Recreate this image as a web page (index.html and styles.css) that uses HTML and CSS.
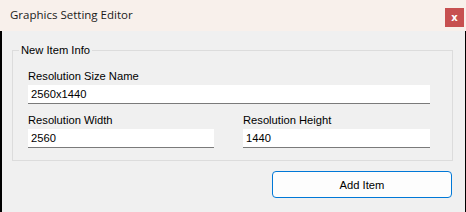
FILE: index.html
```html
<!DOCTYPE html>
<html lang="en">
<head>
    <meta charset="UTF-8">
    <meta name="viewport" content="width=device-width, initial-scale=1.0">
    <title>Graphics Setting Editor</title>
    <link rel="stylesheet" href="styles.css">
</head>
<body>
    <div class="window">
        <!-- Title bar -->
        <div class="titlebar">
            <span class="title">Graphics Setting Editor</span>
            <button class="close-btn">x</button>
        </div>

        <!-- Form -->
        <div class="content">
            <fieldset class="group">
                <legend>New Item Info</legend>
                <label class="field-label" for="name">Resolution Size Name</label>
                <input class="field" type="text" id="name" value="2560x1440">
                <div class="row">
                    <div class="col">
                        <label class="field-label" for="width">Resolution Width</label>
                        <input class="field" type="text" id="width" value="2560">
                    </div>
                    <div class="col">
                        <label class="field-label" for="height">Resolution Height</label>
                        <input class="field" type="text" id="height" value="1440">
                    </div>
                </div>
            </fieldset>
            <div class="actions">
                <button class="add-btn">Add Item</button>
            </div>
        </div>
    </div>
</body>
</html>
```

FILE: styles.css
```css
* {
    box-sizing: border-box;
}
body {
    margin: 0;
    font-family: "Liberation Sans", Arial, sans-serif;
    font-size: 11.2px;
    color: #000;
    background-color: #f0f0f0;
}
.window {
    width: 466px;
    height: 212px;
    display: flex;
    flex-direction: column;
}
.titlebar {
    height: 31px;
    background-color: #f8f0eb;
    display: flex;
    align-items: flex-start;
    justify-content: space-between;
    padding: 0 2px 0 10px;
}
.title {
    font-family: "Open Sans", sans-serif;
    font-size: 11.5px;
    line-height: 16px;
    margin-top: 7px;
    color: #1a1a1a;
}
.close-btn {
    width: 19px;
    height: 19px;
    margin-top: 8px;
    padding: 0;
    border: none;
    background-color: #c75050;
    color: #fff;
    font-family: "DejaVu Sans", sans-serif;
    font-weight: bold;
    font-size: 10px;
    line-height: 17px;
}
.content {
    flex: 1;
    background-color: #f0f0f0;
    border-left: 2px solid #000;
    border-right: 1px solid #000;
    padding: 12px 12px 0 10px;
}
.group {
    margin: 0;
    border: 1px solid #dcdcdc;
    padding: 12px 22px 12px 15px;
}
.group legend {
    padding: 0 2px;
    margin-left: -9px;
    line-height: 14px;
    font-size: 11.2px;
}
.field-label {
    display: block;
    line-height: 14px;
    margin-bottom: 2px;
}
.field {
    display: block;
    width: 100%;
    height: 19px;
    border: none;
    border-bottom: 1px solid #7a7a7a;
    background-color: #fff;
    padding: 0 3px;
    font-family: inherit;
    font-size: 11.2px;
    color: #000;
}
.row {
    display: grid;
    grid-template-columns: 186px 187px;
    column-gap: 29px;
    margin-top: 9px;
}
.actions {
    display: flex;
    justify-content: flex-end;
    padding-right: 1px;
    margin-top: 10px;
}
.add-btn {
    width: 180px;
    height: 27px;
    border: 1px solid #0078d7;
    border-radius: 4px;
    background-color: #fdfdfd;
    font-family: inherit;
    font-size: 11.2px;
    color: #000;
}
```
